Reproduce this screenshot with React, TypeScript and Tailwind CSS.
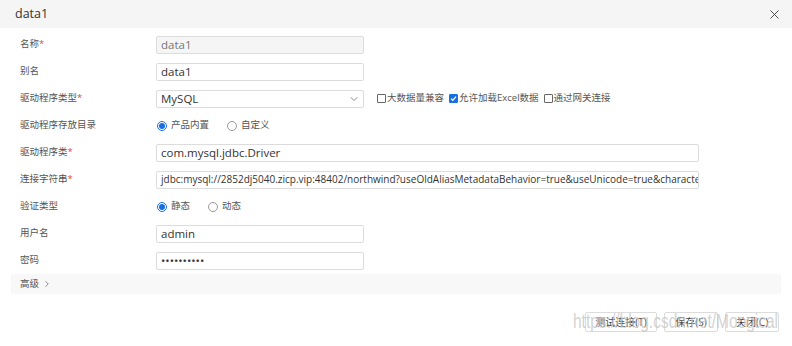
import { X, ChevronDown, ChevronRight } from 'lucide-react';

const font = { fontFamily: '"Open Sans", "Noto Sans CJK SC", sans-serif' };

function Label({ text, required }: { text: string; required?: boolean }) {
  return (
    <div className="w-[136px] shrink-0 text-[9.5px] text-[#555]">
      {text}
      {required && <span className="text-[#e64545]">*</span>}
    </div>
  );
}

function Field({ value, wide, disabled, small }: { value: string; wide?: boolean; disabled?: boolean; small?: boolean }) {
  return (
    <div
      className={`h-[18px] flex items-center px-[4px] border border-[#dcdcdc] rounded-[2px] overflow-hidden whitespace-nowrap text-[#333] ${
        small ? 'text-[10px]' : 'text-[11.5px]'
      } ${wide ? 'w-[543px]' : 'w-[208px]'} ${disabled ? 'bg-[#f5f5f5] text-[#777]' : 'bg-white'}`}
    >
      {value}
    </div>
  );
}

function Radio({ checked, label }: { checked?: boolean; label: string }) {
  return (
    <div className="flex items-center gap-[4px] text-[9.5px] text-[#555]">
      <span
        className={`w-[10px] h-[10px] rounded-full border flex items-center justify-center ${
          checked ? 'border-[#1a6fe0]' : 'border-[#999]'
        }`}
      >
        {checked && <span className="w-[6px] h-[6px] rounded-full bg-[#1a6fe0]" />}
      </span>
      {label}
    </div>
  );
}

function Check({ checked, label }: { checked?: boolean; label: string }) {
  return (
    <div className="flex items-center text-[9.5px] text-[#555]">
      <span
        className={`w-[9px] h-[9px] rounded-[1px] border flex items-center justify-center ${
          checked ? 'bg-[#1a6fe0] border-[#1a6fe0]' : 'bg-white border-[#666]'
        }`}
      >
        {checked && (
          <svg width="7" height="7" viewBox="0 0 10 10">
            <path d="M1.5 5.2 L4 7.6 L8.6 2.2" fill="none" stroke="white" strokeWidth="1.8" />
          </svg>
        )}
      </span>
      <span className="ml-[1px]">{label}</span>
    </div>
  );
}

function Row({ children }: { children: React.ReactNode }) {
  return <div className="h-[27px] flex items-center pl-[20px]">{children}</div>;
}

export default function App() {
  return (
    <div className="w-[792px] h-[346px] bg-white relative overflow-hidden" style={font}>
      <div className="h-[28px] bg-[#f5f5f5] flex items-center justify-between pl-[15px] pr-[10px]">
        <span className="text-[12.5px] text-[#333]">data1</span>
        <X size={15} strokeWidth={1.5} className="text-[#444]" />
      </div>

      <div className="pt-[3px]">
        <Row>
          <Label text="名称" required />
          <Field value="data1" disabled />
        </Row>
        <Row>
          <Label text="别名" />
          <Field value="data1" />
        </Row>
        <Row>
          <Label text="驱动程序类型" required />
          <div className="w-[208px] h-[18px] flex items-center justify-between pl-[4px] pr-[3px] border border-[#dcdcdc] rounded-[2px] text-[11.5px] text-[#333]">
            MySQL
            <ChevronDown size={12} strokeWidth={1.5} className="text-[#666]" />
          </div>
          <div className="flex items-center gap-[5px] ml-[13px]">
            <Check label="大数据量兼容" />
            <Check checked label="允许加载Excel数据" />
            <Check label="通过网关连接" />
          </div>
        </Row>
        <Row>
          <Label text="驱动程序存放目录" />
          <div className="flex items-center gap-[18px] pl-[1px]">
            <Radio checked label="产品内置" />
            <Radio label="自定义" />
          </div>
        </Row>
        <Row>
          <Label text="驱动程序类" required />
          <Field value="com.mysql.jdbc.Driver" wide />
        </Row>
        <Row>
          <Label text="连接字符串" required />
          <Field
            value="jdbc:mysql://2852dj5040.zicp.vip:48402/northwind?useOldAliasMetadataBehavior=true&useUnicode=true&characterEncoding=UTF-8"
            wide
            small
          />
        </Row>
        <Row>
          <Label text="验证类型" />
          <div className="flex items-center gap-[18px] pl-[1px]">
            <Radio checked label="静态" />
            <Radio label="动态" />
          </div>
        </Row>
        <Row>
          <Label text="用户名" />
          <Field value="admin" />
        </Row>
        <Row>
          <Label text="密码" />
          <Field value="••••••••••" />
        </Row>

        <div className="mx-[11px] h-[20px] bg-[#f8f8f9] flex items-center pl-[9px] text-[9.5px] text-[#555] gap-[3px]">
          高级
          <ChevronRight size={10} strokeWidth={1.6} className="text-[#555]" />
        </div>

        <div className="flex justify-end gap-[7px] pr-[13px] mt-[18px]">
          <button className="w-[72px] h-[20px] border border-[#dcdcdc] rounded-[2px] bg-white text-[10px] text-[#444]">
            测试连接(T)
          </button>
          <button className="w-[54px] h-[20px] border border-[#dcdcdc] rounded-[2px] bg-white text-[10px] text-[#444]">
            保存(S)
          </button>
          <button className="w-[54px] h-[20px] border border-[#dcdcdc] rounded-[2px] bg-white text-[10px] text-[#444]">
            关闭(C)
          </button>
        </div>
      </div>

      <div
        className="absolute left-[573px] top-[310px] text-[15.5px] leading-none text-[#c4c4c4]/75 whitespace-nowrap pointer-events-none origin-top-left scale-y-[1.35]"
        style={{ fontFamily: '"Liberation Sans", sans-serif' }}
      >
        https://blog.csdn.net/Moogical
      </div>
    </div>
  );
}
